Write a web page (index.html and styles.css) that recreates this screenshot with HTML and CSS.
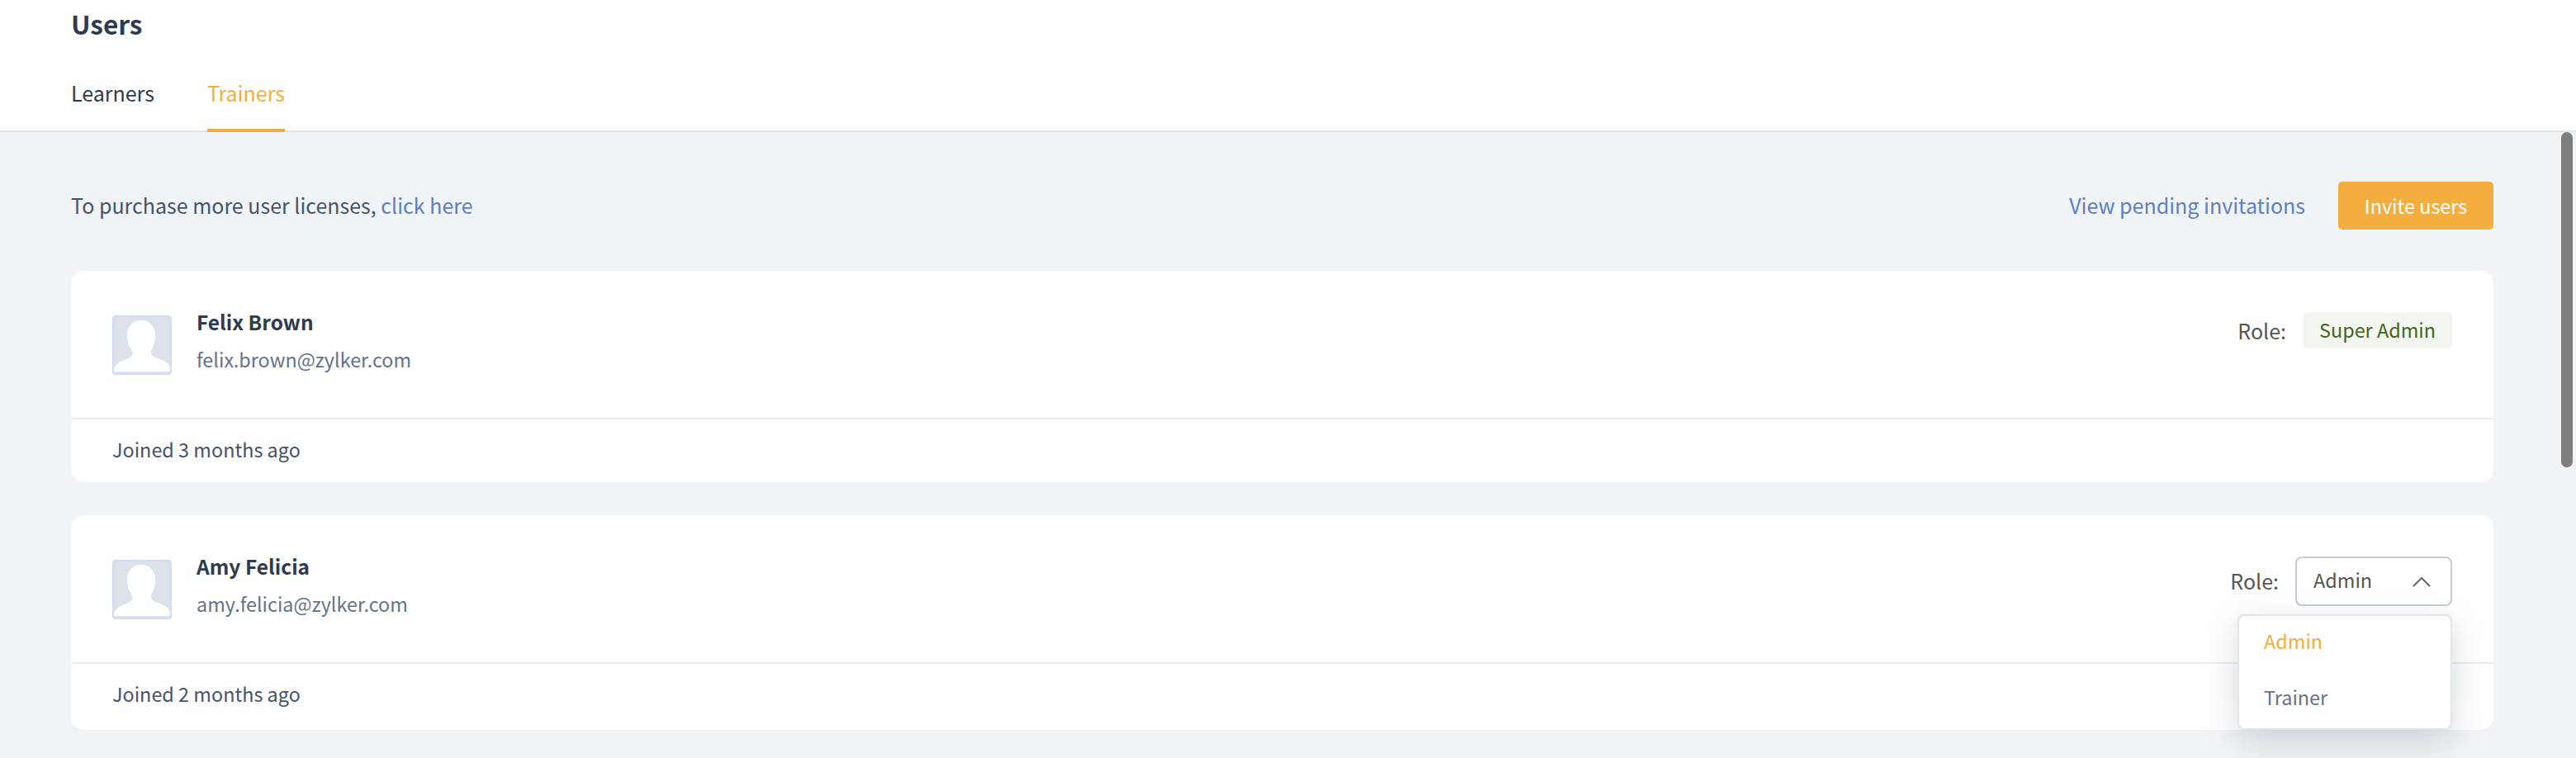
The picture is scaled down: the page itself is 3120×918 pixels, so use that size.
FILE: index.html
```html
<!DOCTYPE html>
<html lang="en">
<head>
  <meta charset="UTF-8" />
  <title>Users</title>
  <link rel="stylesheet" href="styles.css">
</head>
<body>
  <header class="top">
    <h1>Users</h1>
    <nav class="tabs">
      <a href="#">Learners</a>
      <a href="#" class="active">Trainers</a>
    </nav>
  </header>

  <main class="content">
    <div class="toolbar">
      <p>To purchase more user licenses, <a href="#">click here</a></p>
      <div class="actions">
        <a href="#">View pending invitations</a>
        <button type="button" class="invite">Invite users</button>
      </div>
    </div>

    <section class="card">
      <div class="card-main">
        <svg class="avatar" viewBox="0 0 72 72"><use href="#person"/></svg>
        <div class="who">
          <h3>Felix Brown</h3>
          <p>felix.brown@zylker.com</p>
        </div>
        <div class="role">
          <span class="role-label">Role:</span>
          <span class="badge">Super Admin</span>
        </div>
      </div>
      <div class="card-foot">Joined 3 months ago</div>
    </section>

    <section class="card second">
      <div class="card-main">
        <svg class="avatar" viewBox="0 0 72 72"><use href="#person"/></svg>
        <div class="who">
          <h3>Amy Felicia</h3>
          <p>amy.felicia@zylker.com</p>
        </div>
        <div class="role picker">
          <span class="role-label">Role:</span>
          <div class="select">
            <span>Admin</span>
            <svg class="chevron" viewBox="0 0 22 13"><path d="M1 12 L11 2 L21 12"/></svg>
          </div>
          <ul class="menu">
            <li class="active">Admin</li>
            <li>Trainer</li>
          </ul>
        </div>
      </div>
      <div class="card-foot">Joined 2 months ago</div>
    </section>
  </main>

  <div class="scroll-thumb"></div>

  <!-- avatar silhouette, shared by both cards -->
  <svg class="defs" width="0" height="0">
    <symbol id="person" viewBox="0 0 72 72">
      <rect x="1" y="1" width="70" height="70" rx="3" fill="#dde2ea" stroke="#d0dcf5" stroke-width="2"/>
      <path fill="#fff" d="M35 6 C45 6 52 13 52 24 C52 32 50 37 48 41 C46 44 47 47 49 49 C54 53 63 54 67 58 C69 60 70 63 70 66 L70 68 L2 68 L2 66 C2 63 4 60 7 58 C12 54 19 53 23 50 C25 48 25 44 23 41 C20 37 18 32 18 24 C18 13 25 6 35 6 Z"/>
    </symbol>
  </svg>
</body>
</html>
```

FILE: styles.css
```css
* { box-sizing: border-box; }
html, body { height: 100%; }
body { margin: 0; overflow: hidden; background: #f1f4f7; color: #2d3a4f; font-family: "Noto Sans CJK SC", "Noto Sans", sans-serif; font-size: 23.4px; line-height: 36px; }
a { color: #5b7ec9; text-decoration: none; }
p, h1, h3, ul { margin: 0; padding: 0; }

.top { height: 160px; background: #fff; border-bottom: 2px solid #dfe5ea; padding: 8px 86px 0; }
.top h1 { font-size: 31.5px; line-height: 40px; font-weight: 700; color: #2d3a4f; }
.tabs { display: flex; gap: 64px; margin-top: 46px; }
.tabs a { color: #2d3a4f; font-size: 25px; line-height: 36px; height: 66px; }
.tabs a.active { color: #f4ae3d; border-bottom: 4px solid #f4ae3d; }

.content { padding: 60px 100px 0 86px; }
.toolbar { display: flex; justify-content: space-between; align-items: center; height: 58px; color: #46536a; font-size: 25px; }
.toolbar p, .actions a { margin-top: -2px; }
.actions { display: flex; align-items: center; gap: 40px; }
.invite { width: 188px; height: 58px; padding-bottom: 2px; border: none; border-radius: 5px; background: #f4ae3d; color: #fff; font: inherit; font-size: 23.4px; }

.card { background: #fff; border-radius: 16px; margin-top: 50px; }
.card.second { margin-top: 40px; }
.card-main { display: flex; align-items: flex-start; height: 180px; padding: 50px 50px 0; border-bottom: 2px solid #e9edf1; }
.avatar { width: 72px; height: 72px; margin-top: 4px; }
.who { margin-left: 30px; flex: 1; margin-top: -6px; }
.who h3 { font-size: 24.5px; line-height: 36px; font-weight: 700; color: #2d3a4f; }
.who p { line-height: 36px; margin-top: 9px; color: #66738a; }
.card-foot { height: 76px; padding: 18px 50px 0; color: #46536a; }
.second .card-foot { height: 80px; }

.role { display: flex; align-items: center; height: 44px; gap: 20px; color: #555; font-size: 25px; position: relative; }
.badge { height: 44px; padding: 0 20px; background: #f3f5f1; border-radius: 5px; color: #43651f; font-size: 23.4px; line-height: 42px; }
.picker { height: 60px; }
.picker .role-label { margin-top: -2px; }
.select { display: flex; justify-content: space-between; align-items: center; width: 190px; height: 60px; padding: 0 24px 0 20px; border: 2px solid #c6ccd3; border-radius: 8px; font-size: 23.4px; color: #555; background: #fff; }
.select span { margin-top: -4px; }
.chevron { width: 22px; height: 13px; fill: none; stroke: #666; stroke-width: 2; }

.menu { position: absolute; top: 70px; right: 0; width: 260px; height: 140px; list-style: none; padding: 8px 0 0 30px; background: #fff; border: 2px solid #e0e5ea; border-radius: 8px; box-shadow: 0 12px 40px rgba(60, 80, 100, 0.22); font-size: 23.4px; color: #66738a; z-index: 2; }
.menu li { height: 68px; line-height: 44px; }
.menu li.active { color: #f4ae3d; }

.scroll-thumb { position: absolute; top: 160px; right: 4px; width: 14px; height: 406px; border-radius: 7px; background: #7e7e7e; }
.defs { position: absolute; }
```
